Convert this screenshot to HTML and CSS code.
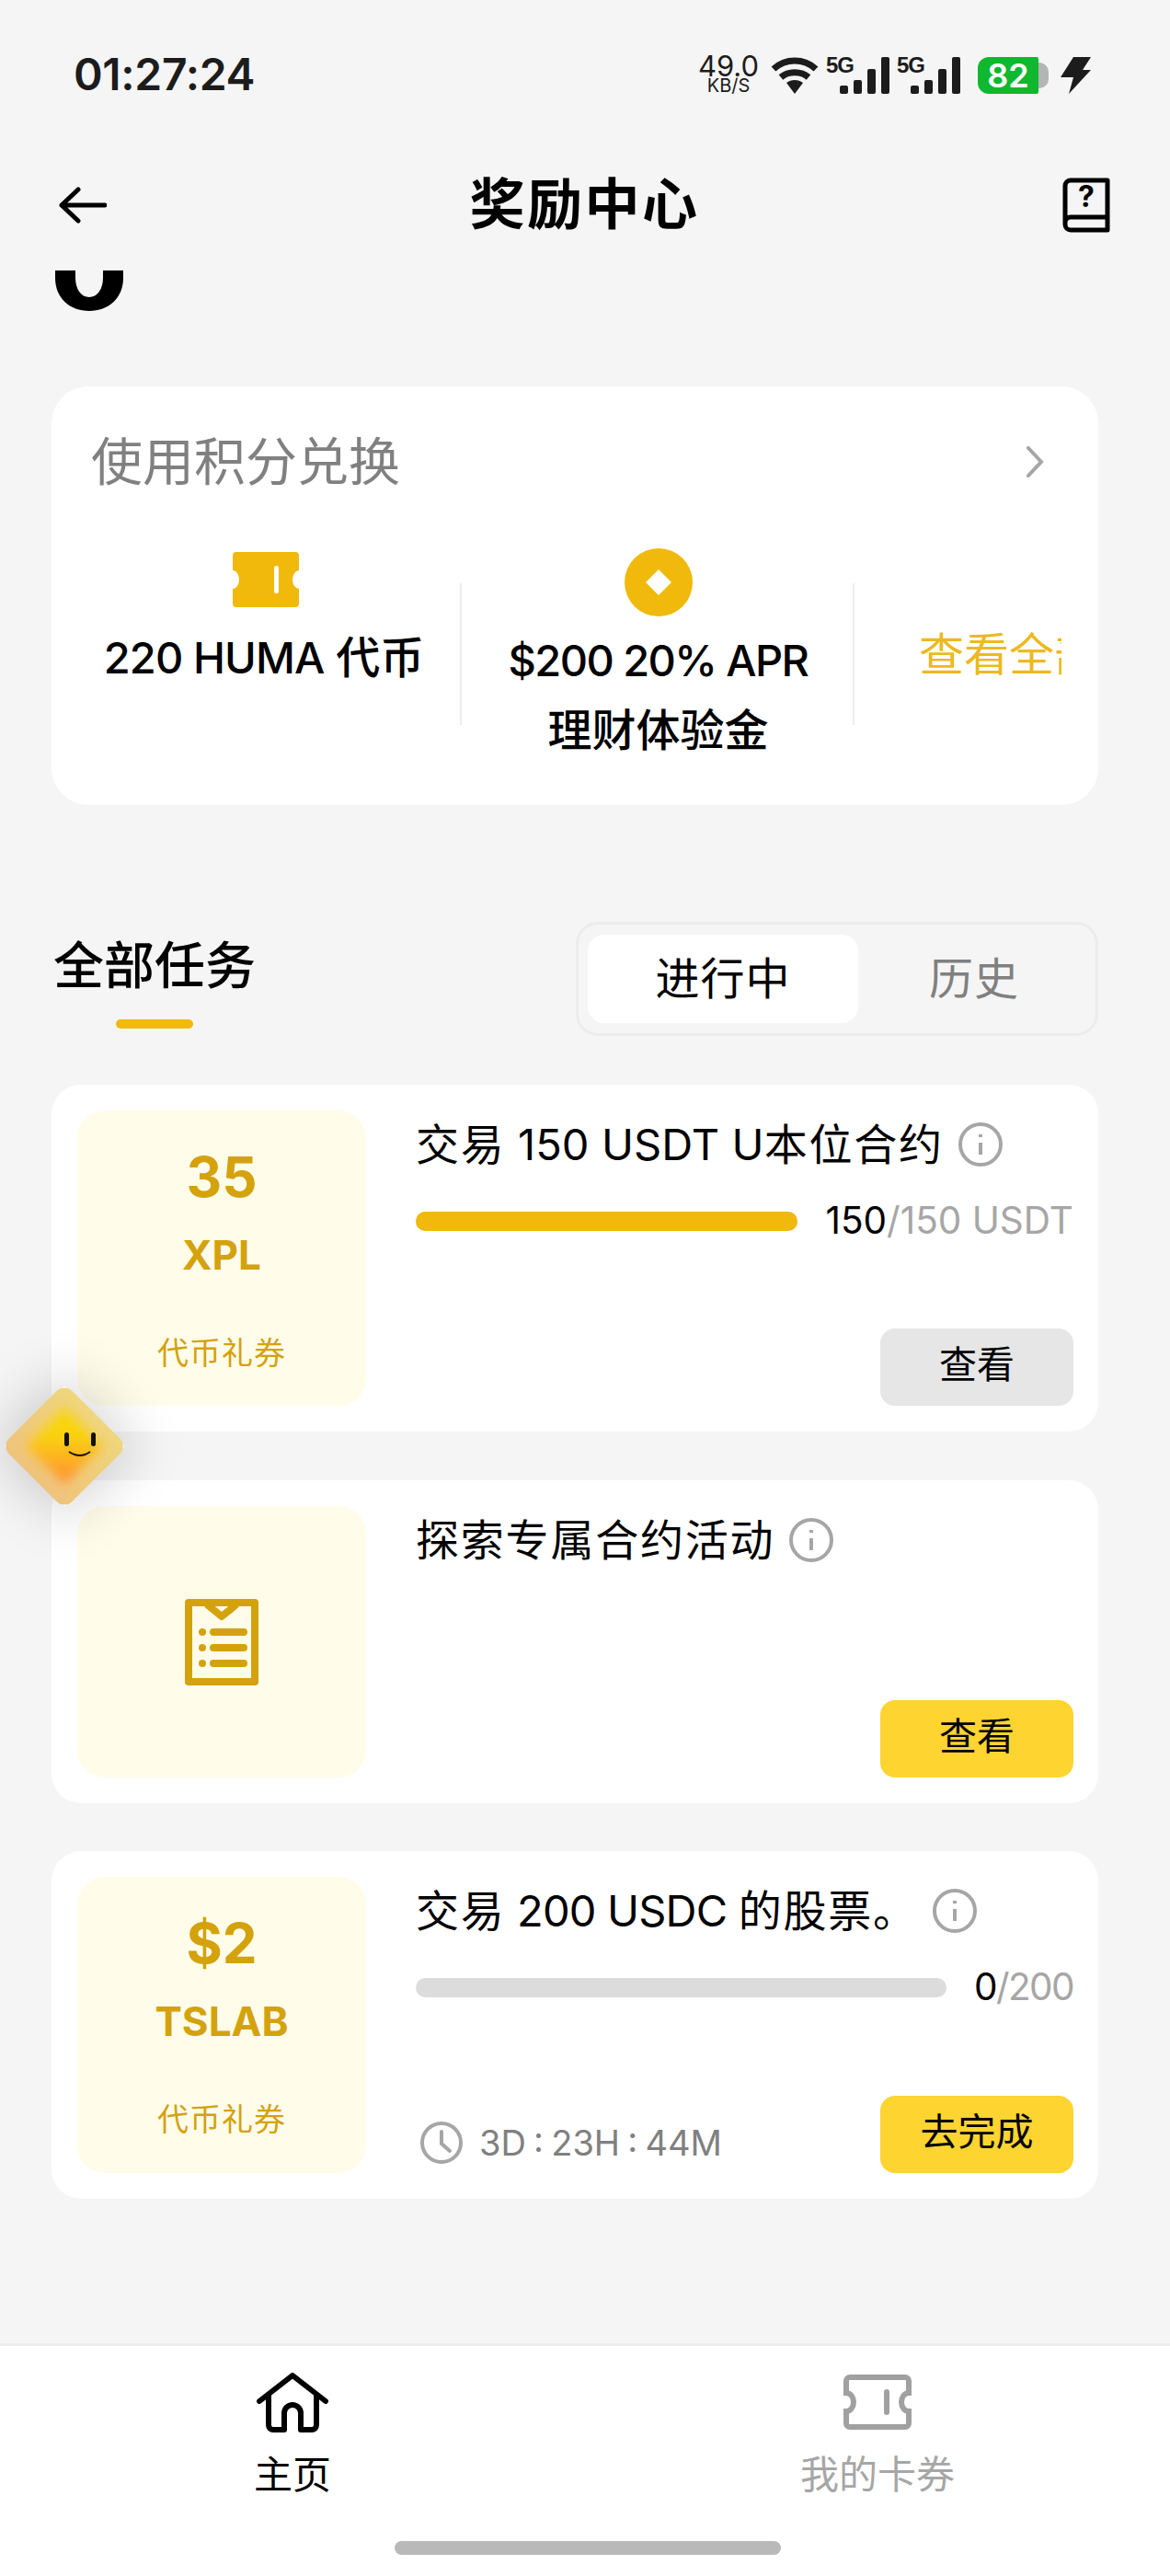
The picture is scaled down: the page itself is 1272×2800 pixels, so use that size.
FILE: index.html
```html
<!DOCTYPE html>
<html lang="zh">
<head>
<meta charset="utf-8">
<title>奖励中心</title>
<link rel="stylesheet" href="styles.css">
</head>
<body>
<div class="page">
  <div class="status">
    <div class="time">01:27:24</div>
    <div class="sys">
      <div class="speed"><span class="speed-n">49.0</span><span class="speed-u">KB/S</span></div>
      <svg class="wifi" width="52" height="40" viewBox="0 0 52 40"><path d="M3 13C16 1 36 1 49 13" class="wifi-a"/><path d="M11 22C19 15 33 15 41 22" class="wifi-a"/><path d="M17 28C22 24 30 24 35 28L26 40Z" class="wifi-b"/></svg>
      <div class="sim"><span class="fiveg">5G</span><i class="bar b1"></i><i class="bar b2"></i><i class="bar b3"></i><i class="bar b4"></i></div>
      <div class="sim"><span class="fiveg">5G</span><i class="bar b1"></i><i class="bar b2"></i><i class="bar b3"></i><i class="bar b4"></i></div>
      <div class="battery"><span class="batt-fill">82</span><span class="batt-cap"></span></div>
      <svg class="bolt" width="33" height="40" viewBox="0 0 33 40"><path d="M14 0H33L24 14H33L9 40L14 22H0Z"/></svg>
    </div>
  </div>

  <header class="topbar">
    <svg class="back" width="52" height="40" viewBox="0 0 52 40"><path d="M50 20H3M21 3L3 20L21 37"/></svg>
    <h1 class="title">奖励中心</h1>
    <svg class="guide" width="52" height="60" viewBox="0 0 52 60"><path class="guide-line" d="M3 49V9a6 6 0 0 1 6-6H49V57H9a6 6 0 0 1-6-6V49a6 6 0 0 1 6-6H49"/><text x="26" y="32" class="guide-q">?</text></svg>
  </header>

  <main class="content">
    <svg class="logo-cut" width="74" height="44" viewBox="0 0 74 44"><path d="M0 0H22V8C22 20 28 29 37 29S52 20 52 8V0H74V8C74 30 58 44 37 44S0 30 0 8Z"/></svg>

    <section class="exchange">
      <div class="ex-head">
        <span class="ex-title">使用积分兑换</span>
        <svg class="chev" width="20" height="34" viewBox="0 0 20 34"><path d="M3 2L17 17L3 32"/></svg>
      </div>
      <div class="ex-row">
        <div class="ex-item ex-first">
          <svg class="ex-icon" width="72" height="60" viewBox="0 0 72 60"><path class="tk-fill" d="M4 0H68a4 4 0 0 1 4 4V20a7 10 0 0 0 0 20V56a4 4 0 0 1-4 4H4a4 4 0 0 1-4-4V40a7 10 0 0 0 0-20V4a4 4 0 0 1 4-4Z"/><rect class="tk-slot" x="45" y="15" width="5" height="30" rx="2.5"/></svg>
          <div class="ex-label"><span class="lat">220 HUMA</span> <span class="zh">代币</span></div>
        </div>
        <div class="ex-item ex-second">
          <svg class="ex-icon" width="74" height="74" viewBox="0 0 74 74"><circle class="tk-fill" cx="37" cy="37" r="37"/><path class="tk-slot" d="M37 23L51 37L37 51L23 37Z"/></svg>
          <div class="ex-label"><span class="lat">$200 20% APR</span><br><span class="zh">理财体验金</span></div>
        </div>
        <div class="ex-all"><span class="ex-all-text">查看全部</span></div>
      </div>
    </section>

    <section class="tasks-head">
      <div class="tasks-title-wrap">
        <h2 class="tasks-title">全部任务</h2>
        <span class="tasks-mark"></span>
      </div>
      <div class="tabs">
        <span class="tab tab-on">进行中</span>
        <span class="tab">历史</span>
      </div>
    </section>

    <section class="card card-a">
      <div class="voucher">
        <div class="v-amount">35</div>
        <div class="v-unit">XPL</div>
        <div class="v-tag">代币礼券</div>
      </div>
      <div class="body">
        <div class="t-row"><span class="t-text">交易<span class="lat-t"> 150 USDT U</span>本位合约</span>
          <svg class="info" width="48" height="48" viewBox="0 0 48 48"><circle cx="24" cy="24" r="22"/><path d="M24 22V35M24 13V16"/></svg></div>
        <div class="prog-row"><div class="prog"><div class="prog-fill"></div></div><span class="prog-t"><b>150</b>/150 USDT</span></div>
        <div class="foot"><span class="btn btn-grey">查看</span></div>
      </div>
    </section>

    <section class="card card-b">
      <div class="voucher voucher-icon">
        <svg width="80" height="94" viewBox="0 0 80 94"><path class="list-line" d="M4 4H76V90H4Z"/><path class="list-line" d="M24 6L40 19L56 6"/><path class="list-dash" d="M31 36H64M31 53H64M31 70H64"/><circle class="list-dot" cx="19" cy="36" r="4"/><circle class="list-dot" cx="19" cy="53" r="4"/><circle class="list-dot" cx="19" cy="70" r="4"/></svg>
      </div>
      <div class="body">
        <div class="t-row"><span class="t-text">探索专属合约活动</span>
          <svg class="info" width="48" height="48" viewBox="0 0 48 48"><circle cx="24" cy="24" r="22"/><path d="M24 22V35M24 13V16"/></svg></div>
        <div class="foot"><span class="btn">查看</span></div>
      </div>
    </section>

    <section class="card card-c">
      <div class="voucher">
        <div class="v-amount">$2</div>
        <div class="v-unit">TSLAB</div>
        <div class="v-tag">代币礼券</div>
      </div>
      <div class="body">
        <div class="t-row"><span class="t-text">交易<span class="lat-t lat-tight"> 200 USDC </span>的股票。</span>
          <svg class="info" width="48" height="48" viewBox="0 0 48 48"><circle cx="24" cy="24" r="22"/><path d="M24 22V35M24 13V16"/></svg></div>
        <div class="prog-row"><div class="prog prog-empty"></div><span class="prog-t"><b>0</b>/200</span></div>
        <div class="foot foot-split">
          <div class="timer">
            <svg class="clock" width="46" height="46" viewBox="0 0 46 46"><circle cx="23" cy="23" r="21"/><path d="M23 11V24L32 32"/></svg>
            <span>3D : 23H : 44M</span>
          </div>
          <span class="btn">去完成</span>
        </div>
      </div>
    </section>
  </main>

  <nav class="nav">
    <div class="nav-item">
      <svg class="nav-icon" width="78" height="66" viewBox="0 0 78 66"><path class="home" d="M3 31L39 3L75 31M13 24V57a5 5 0 0 0 5 5H30V44a9 9 0 0 1 18 0V62H60a5 5 0 0 0 5-5V24"/></svg>
      <span class="nav-label nav-label-on">主页</span>
    </div>
    <div class="nav-item">
      <svg class="nav-icon nav-icon-c" width="74" height="60" viewBox="0 0 74 60"><path class="coupon" d="M7 3H67a4 4 0 0 1 4 4V20a8 10 0 0 0 0 20V53a4 4 0 0 1-4 4H7a4 4 0 0 1-4-4V40a8 10 0 0 0 0-20V7a4 4 0 0 1 4-4Z"/><path class="coupon" d="M47 19V41"/></svg>
      <span class="nav-label">我的卡券</span>
    </div>
  </nav>
  <div class="home-bar-wrap"><span class="home-bar"></span></div>

  <div class="float">
    <svg width="140" height="140" viewBox="0 0 140 140">
      <defs>
        <linearGradient id="fEdge" x1="0" y1="0" x2="0" y2="1"><stop offset="0" stop-color="#efd67c"/><stop offset="1" stop-color="#efc37c"/></linearGradient>
        <linearGradient id="fCore" x1="0" y1="0" x2="0" y2="1"><stop offset="0.35" stop-color="#f9d40f"/><stop offset="0.9" stop-color="#ff9630"/></linearGradient>
        <filter id="fBlur" x="-30%" y="-30%" width="160%" height="160%"><feGaussianBlur stdDeviation="6"/></filter>
      </defs>
      <rect x="21.5" y="21.5" width="97" height="97" rx="12" transform="rotate(45 70 70)" fill="url(#fEdge)"/>
      <path d="M70 28L112 70L70 112L28 70Z" fill="url(#fCore)" filter="url(#fBlur)"/>
      <rect x="70" y="55" width="5" height="15" rx="2.5" fill="#111"/>
      <rect x="99" y="55" width="5" height="15" rx="2.5" fill="#111"/>
      <path d="M75 76Q87 84 98 76" fill="none" stroke="#111" stroke-width="2"/>
    </svg>
  </div>
</div>
</body>
</html>
```
FILE: styles.css
```css
* { box-sizing: border-box; }
html, body { margin: 0; padding: 0; }
body { font-family: Inter, "Noto Sans CJK SC", sans-serif; color: #000; background: #f5f5f5; }
.page { position: relative; width: 1272px; height: 2800px; display: flex; flex-direction: column; overflow: hidden; background: #f5f5f5; }

/* status bar */
.status { height: 160px; padding: 60px 86px 0 80px; display: flex; justify-content: space-between; align-items: flex-start; flex: none; }
.time { font-size: 48px; line-height: 42px; font-weight: 600; color: #1c1c1c; letter-spacing: -0.3px; }
.sys { display: flex; align-items: flex-start; height: 42px; }
.speed { width: 70px; display: flex; flex-direction: column; align-items: center; color: #1c1c1c; margin-right: 11px; }
.speed-n { font-size: 31px; line-height: 24px; }
.speed-u { font-size: 20px; line-height: 18px; }
.wifi { margin-top: 2px; margin-right: 8px; }
.wifi-a { fill: none; stroke: #1c1c1c; stroke-width: 7; }
.wifi-b { fill: #1c1c1c; }
.sim { position: relative; width: 69px; height: 42px; margin-right: 8px; display: flex; align-items: flex-end; justify-content: flex-end; gap: 6px; padding-right: 0; }
.sim + .sim { margin-right: 19px; }
.fiveg { position: absolute; left: 0; top: 0; font-family: "Liberation Sans Narrow", "Liberation Sans", sans-serif; font-size: 24px; line-height: 22px; font-weight: 700; color: #1c1c1c; letter-spacing: -1px; }
.bar { display: block; width: 9px; background: #1c1c1c; border-radius: 2px; }
.b1 { height: 9px; }
.b2 { height: 15px; }
.b3 { height: 27px; }
.b4 { height: 40px; }
.battery { display: flex; align-items: center; height: 40px; margin-top: 2px; margin-right: 13px; width: 77px; }
.batt-fill { width: 66px; height: 40px; background: #0fb82e; color: #fff; border-radius: 12px 2px 2px 12px; font-size: 36px; line-height: 40px; font-weight: 600; text-align: center; }
.batt-cap { width: 11px; height: 28px; background: #b5b5b5; border-radius: 0 10px 10px 0; }
.bolt { margin-top: 2px; fill: #1c1c1c; }

/* top bar */
.topbar { height: 124px; padding: 0 65px 0 64px; display: flex; justify-content: space-between; align-items: center; flex: none; }
.back { margin-top: 2px; }
.guide { margin-top: 2px; }
.back path { fill: none; stroke: #000; stroke-width: 5; stroke-linecap: round; stroke-linejoin: round; }
.title { margin: 0; font-size: 60px; line-height: 76px; font-weight: 700; letter-spacing: 2.5px; }
.guide-line { fill: none; stroke: #000; stroke-width: 5; stroke-linejoin: round; }
.guide-q { font-size: 32px; font-weight: 700; text-anchor: middle; fill: #000; }

/* content */
.content { flex: 1; padding: 10px 78px 0 56px; }
.logo-cut { display: block; margin: 0 0 82px 4px; fill: #000; }

.exchange { height: 455px; background: #fff; border-radius: 40px; padding: 49px 0 0 43px; }
.ex-head { display: flex; justify-content: space-between; align-items: center; padding-right: 59px; height: 66px; }
.ex-title { font-size: 56px; line-height: 66px; color: #808080; }
.chev path { fill: none; stroke: #a6a6a6; stroke-width: 4; stroke-linecap: round; }
.ex-row { display: flex; align-items: flex-start; margin-top: 58px; }
.ex-item { display: flex; flex-direction: column; align-items: center; position: relative; height: 230px; }
.ex-icon { flex: none; display: block; }
.ex-first { width: 446px; margin-left: -43px; padding-top: 7px; padding-left: 20px; }
.ex-second { width: 427px; padding-top: 3px; }
.ex-item::after { content: ""; position: absolute; right: 0; top: 41px; width: 2px; height: 154px; background: #ececec; }
.ex-first .ex-label { margin-top: 17px; padding-right: 4px; }
.ex-second .ex-label { margin-top: 10px; }
.ex-label { flex: none; font-size: 48px; line-height: 76px; text-align: center; white-space: nowrap; font-weight: 500; }
.lat { font-size: 47px; letter-spacing: -0.9px; }
.ex-second .lat { letter-spacing: -1.6px; }
.tk-fill { fill: #f0b90b; }
.tk-slot { fill: #fff; }
.ex-all { margin-left: 70px; margin-top: 92px; width: 155px; overflow: hidden; white-space: nowrap; }
.ex-all-text { font-size: 49px; line-height: 54px; color: #edb920; font-weight: 400; display: block; }

/* tasks header */
.tasks-head { display: flex; justify-content: space-between; align-items: flex-start; margin-top: 127px; height: 124px; margin-bottom: 53px; }
.tasks-title-wrap { display: flex; flex-direction: column; align-items: center; padding-left: 2px; padding-top: 14px; }
.tasks-title { margin: 0; font-size: 55px; line-height: 66px; font-weight: 500; }
.tasks-mark { width: 84px; height: 10px; margin-top: 26px; border-radius: 5px; background: #f0b90b; }
.tabs { width: 568px; height: 124px; border: 3px solid #ececec; border-radius: 24px; background: #f5f5f5; padding: 11px 10px; display: flex; }
.tab { flex: none; width: 294px; display: flex; align-items: center; justify-content: center; font-size: 48px; color: #808080; letter-spacing: 1px; border-radius: 18px; padding-bottom: 8px; }
.tab + .tab { width: 244px; padding-left: 8px; }
.tab-on { background: #fff; color: #000; }

/* task cards */
.card { background: #fff; border-radius: 32px; padding: 28px 27px 28px 28px; display: flex; gap: 54px; margin-bottom: 53px; }
.card-a { height: 377px; }
.card-b { height: 351px; margin-bottom: 52px; }
.card-c { height: 378px; }
.voucher { flex: none; width: 314px; background: #fffcea; border-radius: 30px; padding-top: 36px; display: flex; flex-direction: column; align-items: center; color: #d4a20c; }
.voucher-icon { padding-top: 0; justify-content: center; }
.v-amount { font-size: 60px; line-height: 72px; font-weight: 700; }
.v-unit { font-size: 44px; line-height: 98px; font-weight: 700; }
.v-tag { font-size: 34px; line-height: 60px; margin-top: 28px; letter-spacing: 1px; }
.list-line { fill: none; stroke: #d4a20c; stroke-width: 8; stroke-linejoin: round; }
.list-dash { fill: none; stroke: #d4a20c; stroke-width: 8; stroke-linecap: round; }
.list-dot { fill: #d4a20c; }
.body { flex: 1; display: flex; flex-direction: column; min-width: 0; }
.t-row { display: flex; align-items: center; height: 48px; margin-top: 13px; white-space: nowrap; }
.t-text { font-size: 47px; line-height: 48px; font-weight: 400; letter-spacing: 1.8px; white-space: pre; }
.lat-t { letter-spacing: 0.1px; }
.lat-tight { letter-spacing: -0.8px; }
.info { flex: none; margin-left: 16px; }
.info circle { fill: none; stroke: #a6a6a6; stroke-width: 4; }
.info path { fill: none; stroke: #a6a6a6; stroke-width: 4; }
.prog-row { display: flex; align-items: center; height: 48px; margin-top: 35px; justify-content: space-between; }
.prog { flex: 1; height: 21px; border-radius: 11px; background: #dcdcdc; margin-right: 30px; }
.prog-fill { width: 100%; height: 100%; border-radius: 11px; background: #f0b90b; }
.prog-t { font-size: 40.5px; line-height: 48px; color: #a6a6a6; white-space: nowrap; }
.card-c .prog-t { letter-spacing: -1.6px; }
.prog-t b { font-weight: 400; color: #000; }
.foot { margin-top: auto; display: flex; justify-content: flex-end; align-items: flex-end; }
.foot-split { justify-content: space-between; }
.btn { width: 210px; height: 84px; border-radius: 16px; background: #fdd430; display: flex; align-items: center; justify-content: center; font-size: 41px; font-weight: 400; padding-bottom: 12px; }
.btn-grey { background: #e6e6e6; }
.timer { display: flex; align-items: center; gap: 18px; font-size: 38px; line-height: 46px; color: #808080; margin-bottom: 10px; margin-left: 5px; word-spacing: -2.5px; }
.clock { fill: none; stroke: #a6a6a6; stroke-width: 4; stroke-linecap: round; }

/* bottom nav */
.nav { flex: none; height: 208px; background: #fff; border-top: 3px solid #ececec; display: flex; padding-top: 29px; }
.nav-item { width: 636px; display: flex; flex-direction: column; align-items: center; gap: 20px; }
.nav-icon { display: block; }
.nav-icon-c { margin: 2px 0 4px; }
.nav-label { font-size: 42px; line-height: 50px; color: #a6a6a6; }
.nav-label-on { color: #000; }
.home { fill: none; stroke: #000; stroke-width: 6; stroke-linecap: round; stroke-linejoin: round; }
.coupon { fill: none; stroke: #a0a0a0; stroke-width: 6; stroke-linecap: round; }
.home-bar-wrap { flex: none; height: 45px; background: #fff; display: flex; justify-content: center; padding-left: 5px; }
.home-bar { display: block; width: 420px; height: 15px; margin-top: 7px; border-radius: 8px; background: #b9b9b9; }

/* floating mascot */
.float { position: absolute; left: 0; top: 1502px; width: 140px; height: 140px; }
.float::before { content: ""; position: absolute; left: 24px; top: 24px; width: 92px; height: 92px; transform: rotate(45deg); box-shadow: 0 0 60px 12px rgba(0, 0, 0, 0.16); }
.float svg { position: relative; display: block; }
```
